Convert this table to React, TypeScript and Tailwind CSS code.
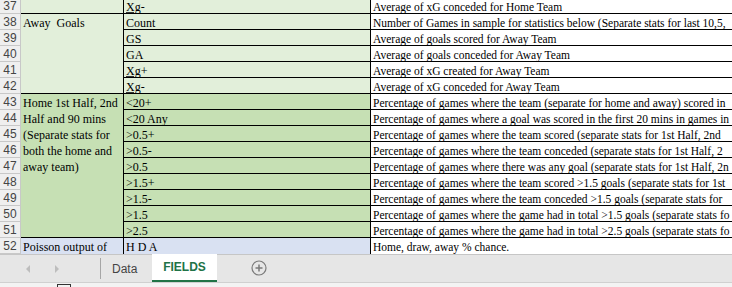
import React from "react";

type Row = { n: number; b: React.ReactNode; c: string };

const Xg = ({ s }: { s: string }) => (
  <span>
    <span className="underline decoration-[#333] underline-offset-[1px]">Xg</span>
    {s}
  </span>
);

const rows: Row[] = [
  { n: 37, b: <Xg s="-" />, c: "Average of xG conceded for Home Team" },
  { n: 38, b: "Count", c: "Number of Games in sample for statistics below (Separate stats for last 10,5," },
  { n: 39, b: "GS", c: "Average of goals scored for Away Team" },
  { n: 40, b: "GA", c: "Average of goals conceded for Away Team" },
  { n: 41, b: <Xg s="+" />, c: "Average of xG created for Away Team" },
  { n: 42, b: <Xg s="-" />, c: "Average of xG conceded for Away Team" },
  { n: 43, b: "<20+", c: "Percentage of games where the team (separate for home and away) scored in" },
  { n: 44, b: "<20 Any", c: "Percentage of games where a goal was scored in the first 20 mins in games in" },
  { n: 45, b: ">0.5+", c: "Percentage of games where the team scored (separate stats for 1st Half, 2nd" },
  { n: 46, b: ">0.5-", c: "Percentage of games where the team conceded  (separate stats for 1st Half, 2" },
  { n: 47, b: ">0.5", c: "Percentage of games where there was any goal (separate stats for 1st Half, 2n" },
  { n: 48, b: ">1.5+", c: "Percentage of games where the team scored >1.5 goals (separate stats for 1st" },
  { n: 49, b: ">1.5-", c: "Percentage of games where the team conceded >1.5 goals (separate stats for" },
  { n: 50, b: ">1.5", c: "Percentage of games where the game had in total >1.5 goals (separate stats fo" },
  { n: 51, b: ">2.5", c: "Percentage of games where the game had in total >2.5 goals (separate stats fo" },
  { n: 52, b: "H D A", c: "Home, draw, away % chance." },
];

const bgFor = (n: number) =>
  n <= 42 ? "bg-[#e2efda]" : n <= 51 ? "bg-[#c6e0b4]" : "bg-[#d9e1f2]";

export default function App() {
  return (
    <div className="w-[732px] h-[287px] overflow-hidden bg-white flex flex-col" style={{ fontFamily: "'Liberation Serif', serif" }}>
      <div className="h-[254px] overflow-hidden">
        <div className="-mt-[2px] grid grid-cols-[21px_102px_247px_1fr] grid-rows-[repeat(16,16px)] text-[12px] leading-[16px] text-black">
          {rows.map((r, i) => (
            <React.Fragment key={r.n}>
              <div
                className="border-r border-b border-[#c8c8c8] bg-[#efefef] text-[#444] text-[12px] leading-[16px] text-center"
                style={{ gridRow: i + 1, gridColumn: 1, fontFamily: "'Liberation Sans', sans-serif" }}
              >
                {r.n}
              </div>
              <div
                className={`border-l border-black pl-[2px] pt-px whitespace-nowrap overflow-hidden ${bgFor(r.n)} ${r.n < 52 ? "border-b" : ""}`}
                style={{ gridRow: i + 1, gridColumn: 3 }}
              >
                {r.b}
              </div>
              <div
                className={`border-l border-black pl-[2px] pt-px text-[11.5px] whitespace-nowrap overflow-hidden bg-white ${r.n < 52 ? "border-b" : ""}`}
                style={{ gridRow: i + 1, gridColumn: 4 }}
              >
                {r.c}
              </div>
            </React.Fragment>
          ))}
          <div className="bg-[#e2efda] border-b border-black" style={{ gridRow: "1 / 2", gridColumn: 2 }} />
          <div className="bg-[#e2efda] border-b border-black pl-[2px] pt-px whitespace-pre" style={{ gridRow: "2 / 7", gridColumn: 2 }}>
            Away  Goals
          </div>
          <div className="bg-[#c6e0b4] border-b border-black pl-[2px] pt-px whitespace-nowrap" style={{ gridRow: "7 / 16", gridColumn: 2 }}>
            <div>Home 1st Half, 2nd</div>
            <div>Half and 90 mins</div>
            <div>(Separate stats for</div>
            <div>both the home and</div>
            <div>away team)</div>
          </div>
          <div className="bg-[#d9e1f2] pl-[2px] pt-px whitespace-nowrap overflow-hidden" style={{ gridRow: "16 / 17", gridColumn: 2 }}>
            Poisson output of
          </div>
        </div>
      </div>

      <div
        className="h-[28px] flex items-stretch bg-[#e6e6e6] border-t border-[#c6c6c6]"
        style={{ fontFamily: "'Liberation Sans', sans-serif" }}
      >
        <div className="w-[100px] flex items-center">
          <div className="ml-[26px] w-0 h-0 border-y-[4px] border-y-transparent border-r-[4px] border-r-[#bdbdbd]" />
          <div className="ml-[25px] w-0 h-0 border-y-[4px] border-y-transparent border-l-[4px] border-l-[#bdbdbd]" />
        </div>
        <div className="w-px bg-[#a6a6a6] my-[3px]" />
        <div className="w-[51px] flex items-center pl-[11px] text-[12px] text-[#444]">Data</div>
        <div className="-mt-px w-[65px] bg-white border-b-2 border-[#217346] flex items-center justify-center text-[12px] font-bold text-[#217346] pb-px">
          FIELDS
        </div>
        <div className="ml-[34px] flex items-center pb-[2px]">
          <svg width="16" height="16" viewBox="0 0 16 16" fill="none" stroke="#7a7a7a" strokeWidth="1.2">
            <circle cx="8" cy="8" r="7" />
            <path d="M8 4.5v7M4.5 8h7" strokeWidth="1.5" />
          </svg>
        </div>
      </div>
      <div className="flex-1 bg-[#f3f3f3] border-t border-[#d0d0d0] relative">
        <div className="absolute left-[57px] top-[1px] w-[14px] h-[6px] border border-[#333] border-b-0" />
      </div>
    </div>
  );
}
